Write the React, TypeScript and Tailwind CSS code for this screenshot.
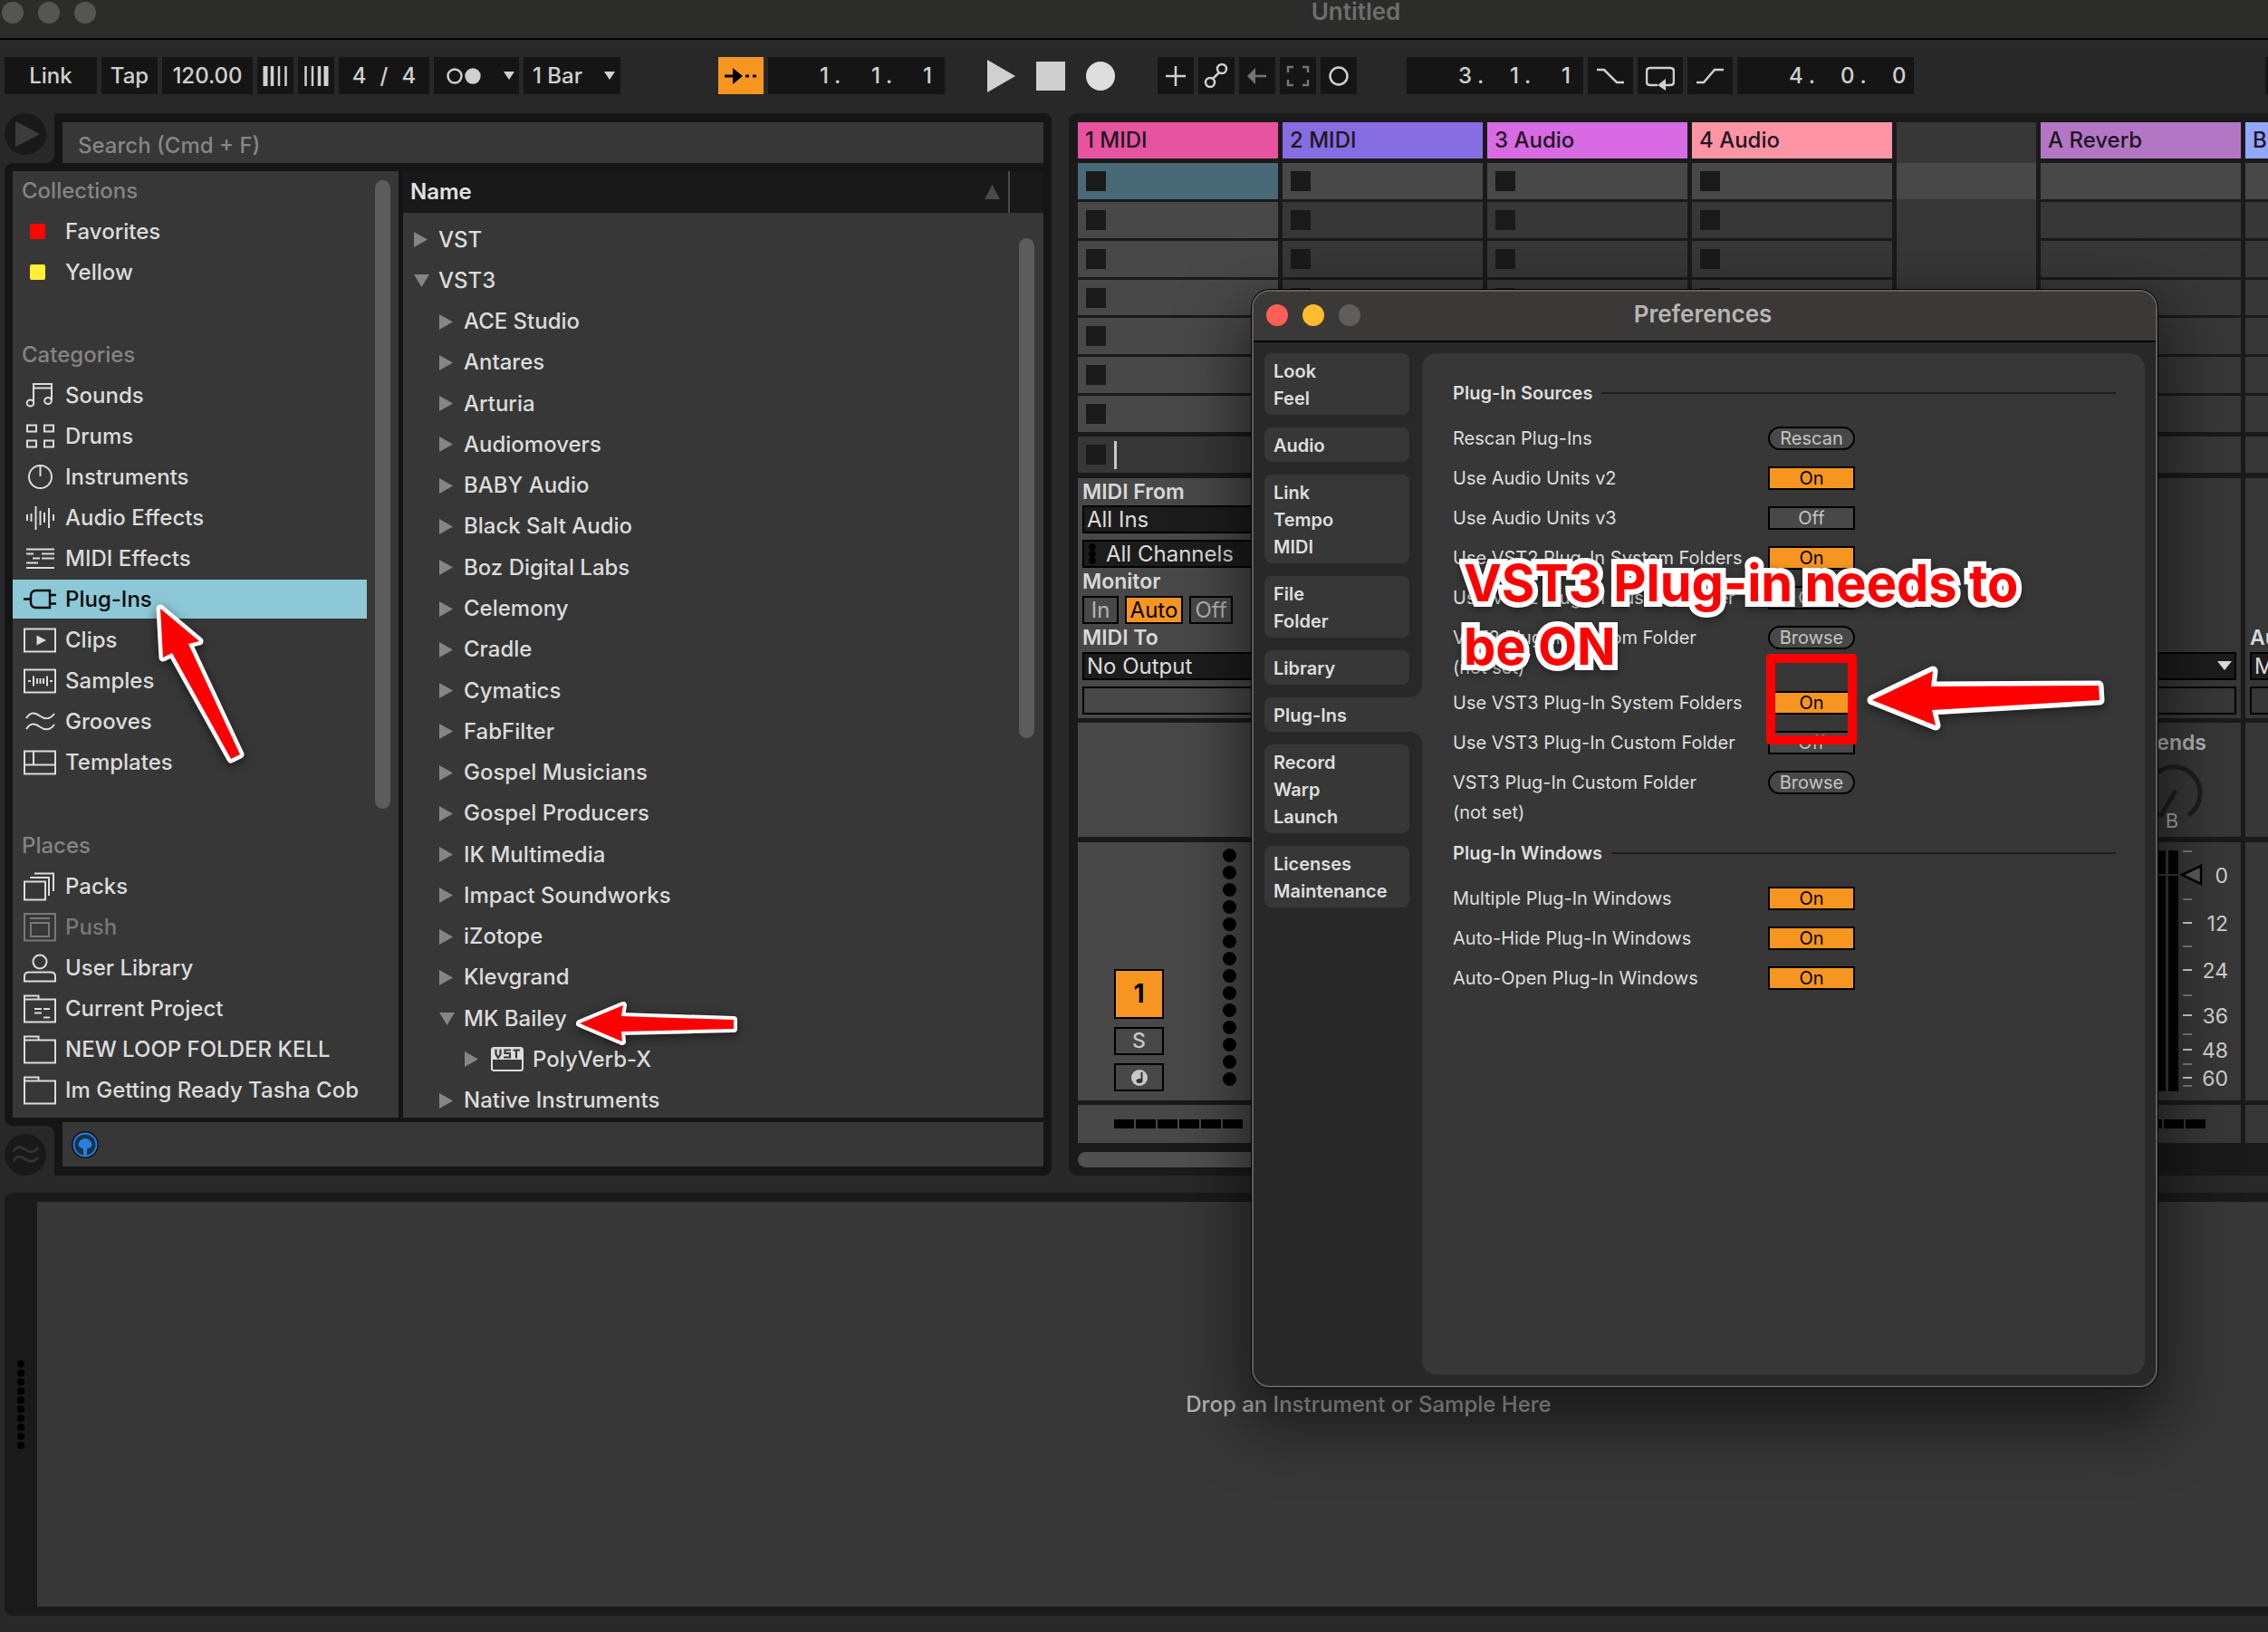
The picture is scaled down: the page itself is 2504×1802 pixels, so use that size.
import clsx from "clsx";
import type { ReactNode } from "react";

type IconProps = { children: ReactNode; className?: string };

const RowIcon = ({ children, className }: IconProps) => (
  <svg
    viewBox="-1 0 38 32"
    className={clsx("h-8 w-[38px] shrink-0", className)}
    fill="none"
    stroke="currentColor"
    strokeWidth="2"
    aria-hidden="true"
  >
    {children}
  </svg>
);

const FolderShape = () => (
  <>
    <path d="M1 5V1.500H16.500V5.500" />
    <rect x="1" y="5.500" width="34" height="25" />
  </>
);

const icons: Record<string, ReactNode> = {
  sounds: (
    <>
      <path d="M11 23V3H31V21M11 7.500H31" />
      <ellipse cx="7.500" cy="24" rx="3.800" ry="3.500" />
      <ellipse cx="27" cy="21.500" rx="3.800" ry="3.500" />
    </>
  ),
  drums: (
    <>
      <rect x="4" y="3.500" width="10" height="7" />
      <rect x="23" y="3.500" width="10" height="7" />
      <rect x="4" y="20.500" width="10" height="7" />
      <rect x="23" y="20.500" width="10" height="7" />
    </>
  ),
  instruments: (
    <>
      <circle cx="18.500" cy="15.500" r="12.500" />
      <path d="M18.500 3V15" />
    </>
  ),
  audioEffects: (
    <path d="M4 12V19M8.500 11V20M13.500 3V29M18.500 8V24M23 10V21M28 5V27M33 12V19" />
  ),
  midiEffects: (
    <path d="M3 5.500H34M3 10.500H11M20 10.500H34M10 15.500H18M20 15.500H34M3 20.500H16M3 26H34" />
  ),
  plugIns: (
    <path
      d="M0 15.500H8M29 25H14Q8 25 8 19V12Q8 6 14 6H29ZM29 11H36M29 20.500H36"
      strokeWidth="2.400"
    />
  ),
  clips: (
    <>
      <rect x="1" y="3.500" width="34" height="25" />
      <path d="M14.500 10.500L25 16L14.500 21.500Z" fill="currentColor" stroke="none" />
    </>
  ),
  samples: (
    <>
      <rect x="1" y="3.500" width="34" height="25" />
      <path d="M5 16H8M11 10.500V21.500M15 13V19M18.500 13V19M22 13V19M26 10.500V21.500M29 16H32" />
    </>
  ),
  grooves: (
    <path d="M3 12C8 4 13 6 18 9.500S29 14 34 7M3 24C8 16 13 18 18 21.500S29 26 34 19" />
  ),
  templates: (
    <>
      <rect x="1" y="3.500" width="34" height="25" />
      <path d="M1 18.500H35M11 3.500V18.500" />
    </>
  ),
  packs: (
    <>
      <rect x="1" y="10.500" width="23" height="20" />
      <path d="M7 6H28V26M12 1.500H33V21" />
    </>
  ),
  push: (
    <>
      <rect x="1" y="1" width="34" height="29.500" />
      <path d="M7 6H29" />
      <rect x="8" y="11" width="20" height="15" />
    </>
  ),
  user: (
    <>
      <circle cx="18" cy="9" r="7.500" />
      <path d="M1 30.500V25Q1 20.500 6 20.500H30Q35 20.500 35 25V30.500Z" />
    </>
  ),
  project: (
    <>
      <FolderShape />
      <path d="M12 16H20M22 16H29M12 20.500H20M22 25.500H29" />
    </>
  ),
  folder: <FolderShape />,
};

const categories = [
  ["sounds", "Sounds"],
  ["drums", "Drums"],
  ["instruments", "Instruments"],
  ["audioEffects", "Audio Effects"],
  ["midiEffects", "MIDI Effects"],
  ["plugIns", "Plug-Ins"],
  ["clips", "Clips"],
  ["samples", "Samples"],
  ["grooves", "Grooves"],
  ["templates", "Templates"],
];

const places = [
  ["packs", "Packs"],
  ["push", "Push"],
  ["user", "User Library"],
  ["project", "Current Project"],
  ["folder", "NEW LOOP FOLDER KELL"],
  ["folder", "Im Getting Ready Tasha Cob"],
];

type TreeRow = { name: string; level: 0 | 1 | 2; open?: boolean };

const tree: TreeRow[] = [
  { name: "VST", level: 0 },
  { name: "VST3", level: 0, open: true },
  { name: "ACE Studio", level: 1 },
  { name: "Antares", level: 1 },
  { name: "Arturia", level: 1 },
  { name: "Audiomovers", level: 1 },
  { name: "BABY Audio", level: 1 },
  { name: "Black Salt Audio", level: 1 },
  { name: "Boz Digital Labs", level: 1 },
  { name: "Celemony", level: 1 },
  { name: "Cradle", level: 1 },
  { name: "Cymatics", level: 1 },
  { name: "FabFilter", level: 1 },
  { name: "Gospel Musicians", level: 1 },
  { name: "Gospel Producers", level: 1 },
  { name: "IK Multimedia", level: 1 },
  { name: "Impact Soundworks", level: 1 },
  { name: "iZotope", level: 1 },
  { name: "Klevgrand", level: 1 },
  { name: "MK Bailey", level: 1, open: true },
  { name: "PolyVerb-X", level: 2 },
  { name: "Native Instruments", level: 1 },
];

const Caret = ({ className }: { className?: string }) => (
  <svg viewBox="0 0 12 9" className={clsx("h-[9px] w-3", className)} aria-hidden="true">
    <path d="M0 0H12L6 9Z" fill="currentColor" />
  </svg>
);

/* ---------- Transport bar ---------- */

const cell = "flex h-[41px] items-center bg-[#151515]";

const Position = ({ label, digits }: { label: string; digits: string[] }) => (
  <div className={clsx(cell, "w-[195px] pl-[57px]")} aria-label={label}>
    {digits.map((digit, i) => (
      <span key={i} className={clsx("flex gap-1.5", i < 2 ? "w-[57px]" : "flex-1")}>
        <span>{digit}</span>
        {i < 2 ? <span>.</span> : null}
      </span>
    ))}
  </div>
);

const IconCell = ({
  label,
  className,
  children,
}: {
  label: string;
  className?: string;
  children: ReactNode;
}) => (
  <button type="button" aria-label={label} className={clsx(cell, "justify-center", className)}>
    <svg
      viewBox="0 0 32 32"
      className="size-8"
      fill="none"
      stroke="currentColor"
      strokeWidth="2.500"
      aria-hidden="true"
    >
      {children}
    </svg>
  </button>
);

const Transport = () => (
  <div className="flex h-[81px] shrink-0 items-start overflow-hidden pt-[19px] pl-[5px] text-2xl font-medium text-[#d0d0d0]">
    <div className="flex gap-[5px]">
      <button type="button" className={clsx(cell, "w-[102px] justify-center")}>Link</button>
      <button type="button" className={clsx(cell, "w-[62px] justify-center")}>Tap</button>
      <div className={clsx(cell, "w-[100px] justify-center")}>120.00</div>
      <IconCell label="Nudge down" className="w-10">
        <path d="M5 5V27" strokeWidth="5" />
        <path d="M12.500 5V27" strokeWidth="3.500" />
        <path d="M20 5V27" />
        <path d="M27.500 5V27" />
      </IconCell>
      <IconCell label="Nudge up" className="w-10">
        <path d="M4.500 5V27" />
        <path d="M12 5V27" />
        <path d="M19.500 5V27" strokeWidth="3.500" />
        <path d="M27 5V27" strokeWidth="5" />
      </IconCell>
      <div className={clsx(cell, "w-[100px] justify-center gap-[15px]")}>
        <span>4</span>
        <span>/</span>
        <span>4</span>
      </div>
      <button type="button" aria-label="Metronome" className={clsx(cell, "w-[94px] gap-6 pl-[13px]")}>
        <svg viewBox="0 0 40 20" className="h-5 w-10" aria-hidden="true">
          <circle cx="10" cy="10" r="7.500" fill="none" stroke="currentColor" strokeWidth="2.400" />
          <circle cx="30" cy="10" r="8.700" fill="currentColor" />
        </svg>
        <Caret />
      </button>
      <button type="button" className={clsx(cell, "w-[107px] justify-between pr-1.5 pl-2.5")}>
        1 Bar
        <Caret />
      </button>
    </div>

    <div className="ml-[108px] flex gap-[5px]">
      <button
        type="button"
        aria-label="Follow"
        className="flex h-[41px] w-[50px] items-center justify-center bg-[#f69621]"
      >
        <svg viewBox="0 0 38 20" className="h-5 w-[38px]" aria-hidden="true">
          <path d="M1 8.500H10V1L21 10L10 19V11.500H1Z" />
          <path d="M24 8.500H28V11.500H24ZM32 8.500H36V11.500H32Z" />
        </svg>
      </button>
      <Position label="Arrangement position" digits={["1", "1", "1"]} />
    </div>

    <div className="ml-[47px] flex h-[41px] items-center gap-[23px]">
      <button type="button" aria-label="Play">
        <svg viewBox="0 0 31 36" className="h-9 w-[31px]" aria-hidden="true">
          <path d="M0 0L31 18L0 36Z" fill="currentColor" />
        </svg>
      </button>
      <button type="button" aria-label="Stop" className="size-8 bg-[#cfcfcf]" />
      <button type="button" aria-label="Record" className="size-8 rounded-full bg-[#dedede]" />
    </div>

    <div className="ml-[47px] flex gap-[5px]">
      <IconCell label="Overdub" className="w-10">
        <path d="M16 5V27M5 16H27" />
      </IconCell>
      <IconCell label="Automation arm" className="w-10">
        <circle cx="9" cy="23" r="5" />
        <circle cx="22" cy="8" r="5" />
        <path d="M12 19L19 12" />
      </IconCell>
      <IconCell label="Re-enable automation" className="w-10 text-[#747474]">
        <path d="M14 7V25L5 16Z" fill="currentColor" stroke="none" />
        <path d="M13 16H26" />
      </IconCell>
      <IconCell label="Capture MIDI" className="w-10 text-[#747474]">
        <path d="M5 12V6H11M21 6H27V12M27 20V26H21M11 26H5V20" />
      </IconCell>
      <IconCell label="Session record" className="w-10">
        <circle cx="16" cy="16" r="9.500" />
      </IconCell>
    </div>

    <div className="ml-[55px] flex gap-[5px]">
      <Position label="Loop start" digits={["3", "1", "1"]} />
      <IconCell label="Punch in" className="w-[50px]">
        <path d="M1 9H9L23 23H31" />
      </IconCell>
      <IconCell label="Loop" className="w-[50px]">
        <path d="M13 26H5Q1 26 1 22V11Q1 7 5 7H27Q31 7 31 11V22Q31 26 27 26H22" />
        <path d="M22 19V32L13 26Z" fill="currentColor" stroke="none" />
      </IconCell>
      <IconCell label="Punch out" className="w-[50px]">
        <path d="M1 23H9L21 9H31" />
      </IconCell>
      <Position label="Loop length" digits={["4", "0", "0"]} />
    </div>
    <div className="ml-auto h-[41px] w-[3px] bg-[#151515]" />
  </div>
);

/* ---------- Browser ---------- */

const SideHeading = ({ children, className }: { children: ReactNode; className?: string }) => (
  <h2 className={clsx("flex items-center pl-2.5 font-medium text-[#848484]", className)}>
    {children}
  </h2>
);

const SideItem = ({ icon, label }: { icon: string; label: string }) => {
  const active = icon === "plugIns";
  return (
    <li className="flex h-[45px] items-center">
      <button
        type="button"
        className={clsx(
          "flex h-[43px] w-[391px] items-center gap-[9px] pl-[11px] text-left whitespace-nowrap",
          active && "bg-[#8cc8d6] text-[#0a0a0a]",
          !active && (icon === "push" ? "text-[#787878]" : "text-[#dcdcdc]"),
        )}
      >
        <RowIcon>{icons[icon]}</RowIcon>
        {label}
      </button>
    </li>
  );
};

const ColorItem = ({ label, swatch }: { label: string; swatch: string }) => (
  <li className="flex h-[45px] items-center">
    <button type="button" className="flex items-center gap-[22px] pl-[19px] text-[#dcdcdc]">
      <span className={clsx("size-[17px] rounded-[2px]", swatch)} />
      {label}
    </button>
  </li>
);

const Sidebar = () => (
  <nav className="flex w-[426px] shrink-0 justify-between overflow-hidden bg-[#373737]">
    <div>
      <SideHeading className="h-11">Collections</SideHeading>
      <ul>
        <ColorItem label="Favorites" swatch="bg-[#ff0505]" />
        <ColorItem label="Yellow" swatch="bg-[#fff034]" />
      </ul>
      <SideHeading className="mt-[46px] h-[45px]">Categories</SideHeading>
      <ul>
        {categories.map(([icon, label]) => (
          <SideItem key={label} icon={icon} label={label} />
        ))}
      </ul>
      <SideHeading className="mt-[47px] h-[45px]">Places</SideHeading>
      <ul>
        {places.map(([icon, label]) => (
          <SideItem key={label} icon={icon} label={label} />
        ))}
      </ul>
    </div>
    <div className="mt-2.5 mr-[9px] h-[694px] w-[17px] shrink-0 rounded-full bg-[#5c5c5c]" />
  </nav>
);

const VstBadge = () => (
  <svg viewBox="0 0 36 27" className="h-[27px] w-9 shrink-0" aria-hidden="true">
    <rect x="1" y="1" width="34" height="25" rx="2.500" fill="none" stroke="#dcdcdc" strokeWidth="2" />
    <rect x="1" y="1" width="34" height="13" fill="#dcdcdc" />
    <path
      d="M5.500 2.500V8L8 12L10.500 8V2.500M22 3.500H15.500V7H21V11.500H14M24.500 3.500H32M28 3.500V12.500"
      fill="none"
      stroke="#373737"
      strokeWidth="2.200"
    />
  </svg>
);

const TreeItem = ({ row }: { row: TreeRow }) => (
  <li className="flex flex-1 items-center">
    <button
      type="button"
      aria-expanded={Boolean(row.open)}
      className={clsx(
        "flex items-center leading-8 text-[#dcdcdc]",
        row.level === 0 && "pl-3",
        row.level === 1 && "pl-10",
        row.level === 2 && "pl-[68px]",
      )}
    >
      <svg viewBox="0 0 17 17" className="mr-2.5 size-[17px]" fill="#858585" aria-hidden="true">
        <path d={row.open ? "M0 2H17L8.500 16Z" : "M0 0L15 8.500L0 17Z"} />
      </svg>
      {row.level === 2 ? (
        <span className="mr-2.5 ml-0.5">
          <VstBadge />
        </span>
      ) : null}
      {row.name}
    </button>
  </li>
);

const ContentPane = () => (
  <div className="flex min-w-0 flex-1 flex-col overflow-hidden bg-[#373737]">
    <div className="flex h-[46px] shrink-0 items-center justify-between bg-[#191919] text-[#e2e2e2]">
      <h2 className="pl-2 font-semibold">Name</h2>
      <div className="flex h-full items-center">
        <svg viewBox="0 0 17 16" className="mr-[9px] h-4 w-[17px]" aria-hidden="true">
          <path d="M8.500 0L17 16H0Z" fill="#4a4a4a" />
        </svg>
        <div className="mr-[37px] h-full w-0.5 bg-[#4a4a4a]" />
      </div>
    </div>
    <div className="-mb-1 flex flex-1">
      <ul className="flex flex-1 flex-col pt-[7px]">
        {tree.map((row) => (
          <TreeItem key={row.name} row={row} />
        ))}
      </ul>
      <div className="mt-[28px] mr-[10px] h-[552px] w-[17px] rounded-full bg-[#5c5c5c]" />
    </div>
  </div>
);

const Browser = () => (
  <section className="flex w-[1156px] shrink-0 flex-col text-2xl font-medium">
    <div className="flex h-[55px] rounded-t-[9px] bg-[#151515]">
      <div className="h-full w-[55px] rounded-br-[9px] bg-[#282828]">
        <button
          type="button"
          aria-label="Toggle browser"
          className="flex size-[46px] items-center justify-center rounded-full bg-[#191919]"
        >
          <svg viewBox="0 0 28 28" className="ml-1 size-7" aria-hidden="true">
            <path d="M1 0Q2 0 28 14Q2 28 1 28Z" fill="#3c3c3c" />
          </svg>
        </button>
      </div>
      <div className="flex-1 rounded-t-[9px] bg-[#151515] px-[9px] pt-2.5">
        <input
          type="search"
          aria-label="Search"
          placeholder="Search (Cmd + F)"
          className="block h-[50px] w-full bg-[#373737] px-[17px] outline-none placeholder:text-[#868686]"
        />
      </div>
    </div>

    <div className="flex h-[1063px] gap-[5px] rounded-l-[9px] bg-[#151515] p-[9px]">
      <Sidebar />
      <ContentPane />
    </div>

    <div className="flex h-[55px] rounded-br-[9px] bg-[#151515]">
      <div className="flex h-full w-[55px] items-end rounded-tr-[9px] bg-[#282828]">
        <button
          type="button"
          aria-label="Groove pool"
          className="flex size-[46px] items-center justify-center rounded-full bg-[#191919]"
        >
          <svg viewBox="0 0 36 32" className="h-7 w-8" fill="none" stroke="#333" strokeWidth="3" aria-hidden="true">
            <path d="M3 12C8 4 13 6 18 9.500S29 14 34 7M3 24C8 16 13 18 18 21.500S29 26 34 19" />
          </svg>
        </button>
      </div>
      <div className="flex-1 rounded-b-[9px] bg-[#151515] px-[9px]">
        <div className="-mt-1 flex h-[49px] items-center bg-[#373737] pl-2.5">
          <button type="button" aria-label="Preview">
            <svg viewBox="0 0 30 30" className="block size-[30px]" aria-hidden="true">
              <circle cx="15" cy="15" r="15" fill="#101010" />
              <circle cx="15" cy="15" r="12.500" fill="#15324f" stroke="#2b7fdc" strokeWidth="2" />
              <path
                d="M15 8Q21.500 8.500 22.500 15Q22 18 19 18.500Q17 18.500 17 21V28H13V21Q13 18.500 11 18.500Q8 18 7.500 15Q8.500 8.500 15 8Z"
                fill="#2b7fdc"
              />
            </svg>
          </button>
        </div>
      </div>
    </div>
  </section>
);

/* ---------- Session view ---------- */

type TrackProps = {
  name: string;
  color: string;
  selected?: boolean;
  isReturn?: boolean;
  io?: ReactNode;
  sends?: ReactNode;
  mixer?: ReactNode;
  meter?: boolean;
};

const StopSquare = () => <span className="block size-[22px] bg-[#1a1a1a]" />;

const Track = ({ name, color, selected, isReturn, io, sends, mixer, meter }: TrackProps) => {
  const body = selected ? "bg-[#484848]" : "bg-[#373737]";
  return (
    <div className="flex w-[221px] shrink-0 flex-col">
      <h3 className={clsx("mb-[5px] flex h-10 items-center pl-2 font-medium text-[#21161f]", color)}>
        {name}
      </h3>
      <div className="mb-[5px] flex h-[297px] flex-col gap-[3px]">
        {Array.from({ length: 7 }, (_, i) => (
          <div
            key={i}
            className={clsx(
              "flex flex-1 items-center pl-[9px]",
              i === 0 && selected && "bg-[#486a76]",
              i === 0 && !selected && "bg-[#484848]",
              i > 0 && body,
            )}
          >
            {isReturn ? null : <StopSquare />}
          </div>
        ))}
      </div>
      <div className="mb-1.5 flex h-10 items-center bg-[#373737] pl-[9px]">
        {isReturn ? null : <StopSquare />}
        {selected ? <span className="ml-[9px] h-[31px] w-[3px] bg-[#c8c8c8]" /> : null}
      </div>
      <div className={clsx("mb-[5px] flex h-[265px] flex-col px-[5px]", body)}>{io}</div>
      <div className={clsx("mb-1.5 h-[126px]", body)}>{sends}</div>
      <div className={clsx("mb-[5px] h-[285px]", body)}>{mixer}</div>
      <div className={clsx("flex h-[42px] items-center gap-0.5 pl-10", body)}>
        {meter
          ? Array.from({ length: 6 }, (_, i) => <span key={i} className="h-2.5 w-[22px] bg-black" />)
          : null}
      </div>
    </div>
  );
};

const IoSelect = ({
  label,
  value,
  dots,
  className,
}: {
  label: string;
  value: string;
  dots?: boolean;
  className?: string;
}) => (
  <div className={clsx("relative h-[31px]", className)}>
    <select
      aria-label={label}
      className={clsx(
        "block h-full w-full appearance-none border-2 border-black bg-[#1c1c1c] leading-[26px] text-[#dcdcdc]",
        dots ? "pl-6" : "pl-[3px]",
      )}
    >
      <option>{value}</option>
    </select>
    {dots ? (
      <svg viewBox="0 0 8 23" className="absolute top-1 left-[7px] h-[23px] w-2" aria-hidden="true">
        <circle cx="4" cy="4" r="3.800" />
        <circle cx="4" cy="11.500" r="3.800" />
        <circle cx="4" cy="19" r="3.800" />
      </svg>
    ) : null}
    <svg viewBox="0 0 16 10" className="absolute top-2.5 right-[5px] h-2.5 w-4" aria-hidden="true">
      <path d="M0 0H16L8 10Z" fill="#dcdcdc" />
    </svg>
  </div>
);

const IoLabel = ({ children, className }: { children: ReactNode; className?: string }) => (
  <div
    className={clsx(
      "flex items-center text-[23px] font-semibold text-[#d8d8d8]",
      className ?? "h-[31px]",
    )}
  >
    {children}
  </div>
);

const MidiIo = () => (
  <>
    <IoLabel className="h-[30px]">MIDI From</IoLabel>
    <IoSelect label="MIDI input" value="All Ins" />
    <IoSelect label="MIDI channel" value="All Channels" dots className="mt-[7px]" />
    <IoLabel>Monitor</IoLabel>
    <div className="flex h-[31px] gap-[7px] text-[#b4b4b4]">
      <button type="button" className="w-10 border-2 border-black leading-[27px]">In</button>
      <button type="button" className="w-16 border-2 border-black bg-[#f69621] leading-[27px] text-black">
        Auto
      </button>
      <button type="button" className="w-12 border-2 border-black leading-[27px]">Off</button>
    </div>
    <IoLabel>MIDI To</IoLabel>
    <IoSelect label="MIDI output" value="No Output" />
    <div className="mt-[7px] h-[31px] border-2 border-black" />
  </>
);

const ReturnIo = () => (
  <div className="mt-[161px]">
    <IoLabel>Audio To</IoLabel>
    <IoSelect label="Audio output" value="Main" />
    <div className="mt-[7px] h-[31px] border-2 border-black" />
  </div>
);

const MidiMixer = () => (
  <div className="flex h-full justify-between pr-[46px] pl-10">
    <div className="flex w-[55px] flex-col gap-[9px] pt-[140px]">
      <button type="button" className="h-[55px] border-2 border-black bg-[#f69621] text-[28px] font-bold">
        1
      </button>
      <button
        type="button"
        className="h-[31px] border-2 border-black text-[23px] leading-[27px] font-medium text-[#c8c8c8]"
      >
        S
      </button>
      <button
        type="button"
        aria-label="Arm recording"
        className="flex h-[31px] items-center justify-center border-2 border-black"
      >
        <svg viewBox="0 0 18 18" className="size-[18px]" aria-hidden="true">
          <circle cx="9" cy="9" r="9" fill="#c8c8c8" />
          <path d="M11.500 3V12" stroke="#333" strokeWidth="2" />
          <ellipse cx="9" cy="12.500" rx="3.500" ry="2.500" fill="#333" />
        </svg>
      </button>
    </div>
    <div className="flex flex-col gap-1 pt-[7px]">
      {Array.from({ length: 14 }, (_, i) => (
        <span key={i} className="size-[15px] rounded-full bg-black" />
      ))}
    </div>
  </div>
);

const sendKnob = (
  <div className="flex h-full flex-col items-end overflow-hidden pt-1.5 pr-[38px]">
    <span className="text-[23px] leading-8 font-semibold text-[#b4b4b4]">Sends</span>
    <svg viewBox="0 0 70 88" className="-mt-1 h-[88px] w-[70px]" aria-hidden="true">
      <path d="M18 68A29 29 0 1 1 50 68" fill="none" stroke="#1d1d1d" strokeWidth="5" />
      <path d="M35 43L20 68" stroke="#1d1d1d" strokeWidth="5" strokeLinecap="round" />
      <text x="32" y="82" textAnchor="middle" fontSize="22" fill="#a8a8a8">
        B
      </text>
    </svg>
  </div>
);

const meterMarks = [
  { y: 36, label: "0" },
  { y: 89, label: "12" },
  { y: 141, label: "24" },
  { y: 191, label: "36" },
  { y: 229, label: "48" },
  { y: 260, label: "60" },
];

const minorTicks = [10, 63, 115, 169, 212, 245, 269];

const returnMeter = (
  <svg viewBox="0 0 221 285" className="block h-[285px] w-[221px]" aria-label="Return level">
    <path d="M127 9H138V275H127ZM141 9H152V275H141Z" />
    <path d="M120 36H152" stroke="#373737" strokeWidth="2" />
    {minorTicks.map((y) => (
      <path key={y} d={`M157 ${y}H167`} stroke="#7a7a7a" strokeWidth="2" />
    ))}
    {meterMarks.map(({ y, label }) => (
      <g key={label}>
        {label === "0" ? null : <path d={`M157 ${y}H167`} stroke="#d0d0d0" strokeWidth="2" />}
        <text x="207" y={y + 9} textAnchor="end" fontSize="23" fill="#cfcfcf">
          {label}
        </text>
      </g>
    ))}
    <path d="M156 36L177 26V46Z" fill="#5a5a5a" stroke="#000" strokeWidth="2.500" />
  </svg>
);

const Session = () => (
  <section className="ml-[19px] flex min-w-0 flex-1 flex-col overflow-hidden rounded-l-[9px] bg-[#1a1a1a] pt-2.5 pb-[9px] pl-2.5 text-2xl">
    <div className="flex gap-[5px]">
      <Track name="1 MIDI" color="bg-[#e6539f]" selected io={<MidiIo />} mixer={<MidiMixer />} meter />
      <Track name="2 MIDI" color="bg-[#866de2]" />
      <Track name="3 Audio" color="bg-[#d86ae4]" />
      <Track name="4 Audio" color="bg-[#ff94a5]" />
      <div className="flex w-[154px] shrink-0 flex-col bg-[#373737] pt-[45px]">
        <div className="h-10 bg-[#484848]" />
      </div>
      <Track
        name="A Reverb"
        color="bg-[#b376c5]"
        isReturn
        io={<ReturnIo />}
        sends={sendKnob}
        mixer={returnMeter}
        meter
      />
      <Track name="B Delay" color="bg-[#92a7ff]" isReturn io={<ReturnIo />} />
    </div>
    <div className="mt-2.5 h-[17px] w-[900px] rounded-full bg-[#505050]" />
  </section>
);

/* ---------- Preferences window ---------- */

const tabGroups = [
  ["Look", "Feel"],
  ["Audio"],
  ["Link", "Tempo", "MIDI"],
  ["File", "Folder"],
  ["Library"],
  ["Plug-Ins"],
  ["Record", "Warp", "Launch"],
  ["Licenses", "Maintenance"],
];

type Setting = { label: string; value: string; note?: string };

const sources: Setting[] = [
  { label: "Rescan Plug-Ins", value: "Rescan" },
  { label: "Use Audio Units v2", value: "On" },
  { label: "Use Audio Units v3", value: "Off" },
  { label: "Use VST2 Plug-In System Folders", value: "On" },
  { label: "Use VST2 Plug-In Custom Folder", value: "Off" },
  { label: "VST2 Plug-In Custom Folder", value: "Browse", note: "(not set)" },
  { label: "Use VST3 Plug-In System Folders", value: "On" },
  { label: "Use VST3 Plug-In Custom Folder", value: "Off" },
  { label: "VST3 Plug-In Custom Folder", value: "Browse", note: "(not set)" },
];

const windows: Setting[] = [
  { label: "Multiple Plug-In Windows", value: "On" },
  { label: "Auto-Hide Plug-In Windows", value: "On" },
  { label: "Auto-Open Plug-In Windows", value: "On" },
];

const SettingRow = ({ label, value, note }: Setting) => {
  const isToggle = value === "On" || value === "Off";
  return (
    <div>
      <div className="flex h-11 items-center">
        <span className="w-[348px]">{label}</span>
        <button
          type="button"
          aria-label={`${label}: ${value}`}
          aria-pressed={isToggle ? value === "On" : undefined}
          className={clsx(
            "h-[26px] w-24 border-2 border-black leading-[22px]",
            value === "On" ? "bg-[#f69621] text-black" : "bg-[#484848] text-[#c4c4c4]",
            !isToggle && "rounded-full",
          )}
        >
          {value}
        </button>
      </div>
      {note ? <div className="h-7 leading-[22px]">{note}</div> : null}
    </div>
  );
};

const SettingSection = ({ title, rows }: { title: string; rows: Setting[] }) => (
  <section>
    <div className="flex h-14 items-center gap-2.5">
      <h3 className="font-semibold">{title}</h3>
      <div className="h-0.5 flex-1 bg-[#1d1d1d]" />
    </div>
    {rows.map((row) => (
      <SettingRow key={row.label} {...row} />
    ))}
  </section>
);

const TabGroup = ({ names }: { names: string[] }) => {
  const active = names[0] === "Plug-Ins";
  return (
    <div
      className={clsx(
        "relative flex flex-col bg-[#373737] px-2.5 pt-[5px] pb-[3px]",
        active ? "rounded-l-lg" : "mr-3.5 rounded-lg",
      )}
    >
      {names.map((name) => (
        <button key={name} type="button" className="h-[30px] text-left">
          {name}
        </button>
      ))}
      {active ? (
        <>
          <span className="absolute -top-3.5 right-0 size-3.5 bg-[#373737]">
            <span className="block size-full rounded-br-[14px] bg-[#282828]" />
          </span>
          <span className="absolute right-0 -bottom-3.5 size-3.5 bg-[#373737]">
            <span className="block size-full rounded-tr-[14px] bg-[#282828]" />
          </span>
        </>
      ) : null}
    </div>
  );
};

const Preferences = () => (
  <div
    role="dialog"
    aria-labelledby="preferences-title"
    className="absolute top-80 left-[1382px] flex h-[1212px] w-[1000px] flex-col overflow-hidden rounded-[20px] border-2 border-[#5e5e5c] bg-[#282828] text-xl text-[#dedede] shadow-[0_0_0_1px_#000,0_30px_70px_10px_rgba(0,0,0,0.55)]"
  >
    <div className="relative flex h-[56px] shrink-0 items-center border-b-2 border-black bg-[#3a3937] pb-0.5">
      <div className="flex gap-4 pl-3.5">
        <button type="button" aria-label="Close" className="size-6 rounded-full bg-[#ff5f57]" />
        <button type="button" aria-label="Minimize" className="size-6 rounded-full bg-[#febc2e]" />
        <button type="button" aria-label="Zoom" className="size-6 rounded-full bg-[#5f5e5c]" />
      </div>
      <h2
        id="preferences-title"
        className="pointer-events-none absolute inset-x-0 pr-1 pb-0.5 text-center text-[26px] font-semibold text-[#b7b6b4]"
      >
        Preferences
      </h2>
    </div>
    <div className="flex flex-1 p-3">
      <div className="flex w-[174px] flex-col gap-3.5 font-semibold">
        {tabGroups.map((names) => (
          <TabGroup key={names[0]} names={names} />
        ))}
      </div>
      <div className="flex-1 rounded-[16px] bg-[#373737] pt-4 pr-8 pl-[34px]">
        <SettingSection title="Plug-In Sources" rows={sources} />
        <SettingSection title="Plug-In Windows" rows={windows} />
      </div>
    </div>
  </div>
);

/* ---------- Tutorial annotations ---------- */

const Arrow = ({
  viewBox,
  className,
  points,
  outline,
}: {
  viewBox: string;
  className: string;
  points: string;
  outline: number;
}) => (
  <svg
    viewBox={viewBox}
    className={clsx("pointer-events-none absolute overflow-visible drop-shadow-[0_3px_6px_rgba(0,0,0,0.5)]", className)}
    aria-hidden="true"
  >
    <polygon points={points} fill="#fff" stroke="#fff" strokeWidth={outline} strokeLinejoin="round" />
    <polygon points={points} fill="#f00" />
  </svg>
);

const Annotations = () => (
  <>
    <Arrow
      viewBox="170 665 100 180"
      className="top-[665px] left-[170px] h-[180px] w-[100px]"
      points="177,672 220,708 208,711 265,833 255,838 190,721 180,726"
      outline={9}
    />
    <Arrow
      viewBox="635 1105 180 50"
      className="top-[1105px] left-[635px] h-[50px] w-[180px]"
      points="640,1130 688,1110 686,1122 810,1126 810,1136 686,1139 687,1150"
      outline={8}
    />
    <Arrow
      viewBox="2060 735 265 75"
      className="top-[735px] left-[2060px] h-[75px] w-[265px]"
      points="2067,773 2134,741 2132,758 2317,757 2318,773 2133,784 2137,801"
      outline={11}
    />
    <div className="pointer-events-none absolute top-[722px] left-[1950px] size-[100px] rounded border-10 border-[#f00]" />
    <p className="pointer-events-none absolute top-[609px] left-[1616px] text-[56px] leading-[70px] font-bold whitespace-nowrap text-[#f00] drop-shadow-[0_3px_5px_rgba(0,0,0,0.4)] [-webkit-text-stroke:12px_#fff] [paint-order:stroke_fill]">
      VST3 Plug-in needs to
      <br />
      be ON
    </p>
  </>
);

export default function App() {
  return (
    <div className="relative flex min-h-screen flex-col overflow-hidden bg-[#282828] font-['Inter','Liberation_Sans',sans-serif]">
      <header className="flex h-11 shrink-0 items-start border-b-2 border-black bg-[#2c2c2a]">
        <div className="flex gap-4 pt-0.5 pl-0.5">
          <span className="size-6 rounded-full bg-[#555553]" />
          <span className="size-6 rounded-full bg-[#555553]" />
          <span className="size-6 rounded-full bg-[#555553]" />
        </div>
        <h1 className="flex-1 pl-[384px] text-center text-[26px] leading-[26px] font-semibold text-[#6e6e6c]">
          Untitled
        </h1>
      </header>
      <Transport />
      <main className="flex pl-[5px]">
        <Browser />
        <Session />
      </main>
      <section className="mt-[19px] mb-[18px] ml-[5px] flex flex-1 rounded-l-[9px] bg-[#1a1a1a] py-2.5">
        <div className="flex w-9 flex-col items-center justify-center gap-[2px]">
          {Array.from({ length: 10 }, (_, i) => (
            <span key={i} className="size-2 rounded-full bg-black" />
          ))}
        </div>
        <div className="flex flex-1 items-center justify-center bg-[#373737] pl-[477px] text-2xl font-medium text-[#b4b4b4]">
          Drop an Instrument or Sample Here
        </div>
      </section>
      <Preferences />
      <Annotations />
    </div>
  );
}
